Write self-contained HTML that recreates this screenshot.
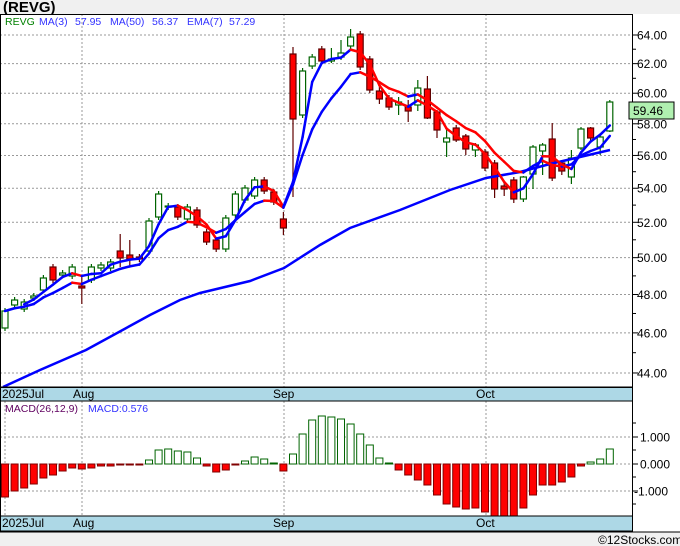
<!DOCTYPE html>
<html><head><meta charset="utf-8">
<style>
body{margin:0;background:#f0f0f0;width:680px;height:546px;overflow:hidden;font-family:"Liberation Sans","DejaVu Sans",sans-serif}
svg{display:block}
</style></head><body>
<svg id="s" width="680" height="546" xmlns="http://www.w3.org/2000/svg" font-family="Liberation Sans, DejaVu Sans, sans-serif"></svg>
<script>
const S=document.getElementById('s');let h='';
const L=Math.log;const Y=p=>35+902*(L(64)-L(p));const P=y=>Math.exp(L(64)-(y-35)/902);
h+='<rect x="0" y="0" width="680" height="546" fill="#f0f0f0"/>';
h+='<rect x="0" y="14" width="632" height="373" fill="#fff"/>';
h+='<rect x="0" y="401" width="632" height="115" fill="#fff"/>';
h+='<rect x="632" y="14" width="48" height="518" fill="#fff"/>';
h+='<rect x="0" y="387" width="632" height="14" fill="#add8e6"/>';
h+='<rect x="0" y="516" width="632" height="15" fill="#add8e6"/>';
h+='<text x="3" y="12" font-size="15" font-weight="bold" fill="#000">(REVG)</text>';
for(let p=44;p<=64;p+=2){let y=Y(p);h+=`<line x1="0" x2="632" y1="${y}" y2="${y}" stroke="#999" stroke-dasharray="2,2"/>`;
h+=`<line x1="632" x2="638" y1="${y}" y2="${y}" stroke="#000"/><text x="637" y="${y+4.5}" font-size="12">${p.toFixed(2)}</text>`;
let y2=Y(p+1);if(p<64)h+=`<line x1="632" x2="636" y1="${y2}" y2="${y2}" stroke="#000"/>`;}
[437,464,491].forEach((y,i)=>{h+=`<line x1="0" x2="632" y1="${y}" y2="${y}" stroke="#999" stroke-dasharray="2,2"/><line x1="632" x2="638" y1="${y}" y2="${y}" stroke="#000"/>`;
h+=`<text x="${i==2?634:640}" y="${y+4.5}" font-size="12">${['1.000','0.000','-1.000'][i]}</text>`;});
[423,450,477,504].forEach(y=>h+=`<line x1="632" x2="636" y1="${y}" y2="${y}" stroke="#000"/>`);
[82,284,486].forEach(x=>{h+=`<line x1="${x}" x2="${x}" y1="14" y2="387" stroke="#999" stroke-dasharray="2,2"/><line x1="${x}" x2="${x}" y1="401" y2="516" stroke="#999" stroke-dasharray="2,2"/>`;});
h+=`<line x1="5" x2="5" y1="401" y2="516" stroke="#999" stroke-dasharray="2,2"/>`;
const D=[[311,328,'g'],[300,305,'g'],[302,309,'g'],[296,298,'g'],[278,290,'g'],[267,280,'r'],[273,275,'g'],[267,276,'g'],[286,288,'r',277,304],[267,280,'g'],[265,268,'g'],[262,268,'g'],[251,258,'r',234,267],[255,259,'r',240,265],[257,259,'r'],[221,251,'g'],[194,217,'g'],[206,207,'g'],[207,217,'r'],[207,219,'g'],[210,225,'r'],[232,242,'r'],[240,249,'r'],[218,249,'g'],[194,215,'g'],[188,200,'g'],[180,196,'g'],[180,191,'r'],[192,202,'r'],[219,228,'r',212,235],[54,119,'r',47,197],[71,115,'g'],[57,66,'g'],[49,61,'r'],[59,61,'g',48,63],[53,57,'g',40,60],[37,46,'g',29,50],[34,67,'r'],[59,90,'r'],[91,99,'r',84,104],[98,107,'r'],[102,105,'g',97,115],[107,111,'r',100,122],[88,105,'g',80,111],[89,118,'r',76,119],[112,130,'r',110,138],[138,142,'g',130,157],[128,140,'r',125,142],[136,149,'r',134,155],[145,150,'g',143,157],[152,168,'r'],[163,189,'r',160,198],[186,189,'r',183,196],[180,199,'r',177,203],[177,199,'g',176,202],[147,174,'g',145,189],[145,151,'g',143,175],[139,178,'r',123,181],[163,171,'r',160,175],[158,177,'g',150,184],[129,148,'g',127,150],[128,138,'r',127,142],[137,147,'g',135,155],[102,131,'g',100,132]];
const X=i=>5+9.6*i;const C=[];
D.forEach((d,i)=>{const x=X(i),g=d[2]=='g';const hi=d[3]||d[0]-3,lo=d[4]||d[1]+3;
C.push(P(g?d[0]:d[1]));
h+=`<line x1="${x}" x2="${x}" y1="${hi}" y2="${lo}" stroke="${g?'#006400':'#600000'}" stroke-width="1.2"/>`;
h+=`<rect x="${x-3}" y="${d[0]}" width="6" height="${Math.max(1,d[1]-d[0])}" fill="${g?'#fff':'#f00'}" stroke="${g?'#006400':'#600000'}" stroke-width="1.2"/>`;});
h+='<polyline fill="none" stroke="#00f" stroke-width="2.5" points="3,387 40,370 86,350 150,315 180,300 200,293 250,281 284,268 320,245 350,228 400,210 450,190 486,178 520,172 550,164 580,157 610,150"/>';
function seg(v){for(let i=1;i<v.length;i++){if(v[i]==null||v[i-1]==null)continue;const c=v[i]<v[i-1]?'#f00':'#00f';
h+=`<line x1="${X(i-1)}" y1="${Y(v[i-1])}" x2="${X(i)}" y2="${Y(v[i])}" stroke="${c}" stroke-width="2.5" stroke-linecap="round"/>`;}}
let e=[],k=2/8;C.forEach((c,i)=>e.push(i?e[i-1]+k*(c-e[i-1]):c));seg(e);
let m=C.map((c,i)=>i<2?null:(C[i]+C[i-1]+C[i-2])/3);seg(m);
const M=[497,491,488,484,478,475,471,468,469,468,466,466,465,465,465,460,450,449,451,452,458,466,472,470,465,461,457,459,463,471,454,434,420,416,417,419,424,434,445,458,463,470,475,480,485,495,504,507,509,508,512,516,516,516,508,495,485,485,482,477,466,462,459,449];
M.forEach((y,i)=>{const x=X(i),g=y<464;const t=Math.min(y,464),b=Math.max(y,464);
h+=`<rect x="${x-3.5}" y="${t}" width="7" height="${Math.max(1,b-t)}" fill="${g?'#fff':'#f00'}" stroke="${g?'#006400':'#800000'}" stroke-width="1"/>`;});
h+='<rect x="0.5" y="14.5" width="632" height="373" fill="none" stroke="#000"/>';
h+='<rect x="0.5" y="387" width="632" height="14" fill="none" stroke="#000"/>';
h+='<rect x="0.5" y="401" width="632" height="115" fill="none" stroke="#000"/>';
h+='<rect x="0.5" y="516" width="632" height="15" fill="none" stroke="#000"/>';
h+='<line x1="0" x2="680" y1="532" y2="532" stroke="#000"/>';
[[2,'2025Jul'],[73,'Aug'],[273,'Sep'],[476,'Oct']].forEach(([x,t])=>{h+=`<text x="${x}" y="398" font-size="12">${t}</text><text x="${x}" y="527" font-size="12">${t}</text>`;});
h+='<g font-size="10.5"><text x="5" y="25" fill="#008000">REVG</text>';
[[39,'MA(3)'],[75,'57.95'],[110,'MA(50)'],[152,'56.37'],[187,'EMA(7)'],[229,'57.29']].forEach(([x,t])=>h+=`<text x="${x}" y="25" fill="#3333ff">${t}</text>`);
h+='<text x="5" y="412" fill="#600060">MACD(26,12,9)</text><text x="88" y="412" fill="#3333ff">MACD:0.576</text></g>';
h+='<rect x="629" y="102" width="45" height="17" fill="#b0f0b0" stroke="#000"/><text x="633" y="115" font-size="12">59.46</text>';
h+='<text x="598" y="544" font-size="12" fill="#000">©12Stocks.com</text>';
S.innerHTML=h;
</script>
</body></html>
